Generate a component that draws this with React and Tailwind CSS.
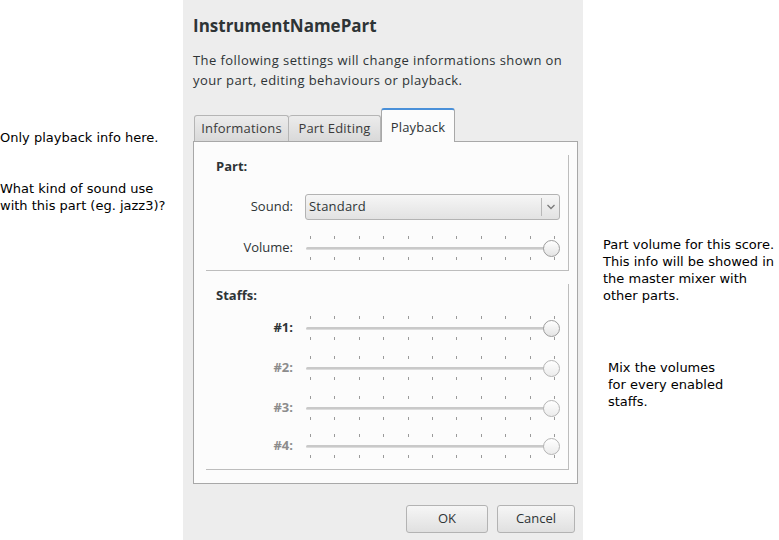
import React from "react";

const dlgFont = { fontFamily: '"Open Sans", "Noto Sans", sans-serif' };

function Ticks() {
  return (
    <div className="flex justify-between px-[5px]">
      {Array.from({ length: 11 }).map((_, i) => (
        <div key={i} className="w-px h-[3px] bg-[#9a9a9a]" />
      ))}
    </div>
  );
}

function Slider({ disabled }) {
  return (
    <div className="relative w-[255px] h-[28px] flex flex-col justify-between py-[2px]">
      <Ticks />
      <Ticks />
      <div className="absolute left-[1px] right-[10px] top-[13px] h-[3px] rounded-full bg-[#c9c9c9] border-b border-[#dcdcdc]" />
      <div
        className={
          "absolute right-0 top-[6px] w-[17px] h-[17px] rounded-full border bg-gradient-to-b " +
          (disabled
            ? "border-[#b4b4b4] from-[#ffffff] to-[#ececec]"
            : "border-[#9c9c9c] from-[#ffffff] to-[#e4e4e4]")
        }
      />
    </div>
  );
}

function Row({ label, children, dim, bold, className = "" }) {
  return (
    <div className={"flex items-center " + className}>
      <div
        className={
          "w-[88px] text-right text-[13px] pr-[1px] " +
          (dim ? "text-[#8c8c8c] font-bold" : bold ? "text-[#2e3436] font-bold" : "text-[#2e3436]")
        }
      >
        {label}
      </div>
      <div className="ml-[11px]">{children}</div>
    </div>
  );
}

export default function App() {
  return (
    <div className="flex w-[779px] h-[540px] bg-white overflow-hidden">
      <div
        className="w-[183px] shrink-0 text-[13px] leading-[17px] text-black"
        style={{ fontFamily: '"DejaVu Sans", sans-serif' }}
      >
        <div className="mt-[129px]">Only playback info here.</div>
        <div className="mt-[34px]">
          What kind of sound use
          <br />
          with this part (eg. jazz3)?
        </div>
      </div>

      <div
        className="w-[400px] shrink-0 h-[540px] bg-[#ededed] flex flex-col pl-[10px] pr-[5px] text-[#2e3436]"
        style={dlgFont}
      >
        <div className="mt-[16px] h-[20px] text-[17px] leading-[20px] font-bold">InstrumentNamePart</div>
        <div className="mt-[14px] text-[13px] leading-[20px] tracking-[0.42px]">
          The following settings will change informations shown on
          <br />
          your part, editing behaviours or playback.
        </div>

        <div className="mt-[18px] h-[33px] flex items-end text-[13px]">
          <div className="ml-[1px] w-[95px] h-[26px] flex items-center justify-center border border-b-0 border-[#b5b5b5] rounded-t-[3px] bg-gradient-to-b from-[#ececec] to-[#d9d9d9] text-[#3a3a3a] tracking-[0.2px]">
            Informations
          </div>
          <div className="w-[92px] h-[26px] flex items-center justify-center border border-l-0 border-b-0 border-[#b5b5b5] rounded-t-[3px] bg-gradient-to-b from-[#ececec] to-[#d9d9d9] text-[#3a3a3a] tracking-[0.2px]">
            Part Editing
          </div>
          <div className="relative -mb-px z-10 w-[74px] h-[34px] flex items-center justify-center border border-b-0 border-[#a8a8a8] border-t-2 border-t-[#4a90d9] rounded-t-[3px] bg-[#fcfcfc] text-[#2e3436] pt-[3px] tracking-[0.2px]">
            Playback
          </div>
        </div>

        <div className="h-[343px] border border-[#a8a8a8] bg-[#fcfcfc] pl-[12px] pr-[8px] pt-[13px] flex flex-col gap-[13px]">
          <div className="h-[116px] border-r border-b border-[#bdbdbd] flex flex-col">
            <div className="pl-[10px] mt-[2px] h-[18px] leading-[18px] text-[13px] font-bold">Part:</div>
            <Row label="Sound:" className="mt-[19px]">
              <div className="w-[255px] h-[26px] rounded-[3px] border border-[#b3b3b3] bg-gradient-to-b from-[#f6f6f6] to-[#e2e2e2] flex items-center text-[13px]">
                <span className="pl-[3px] flex-1 tracking-[0.2px]">Standard</span>
                <div className="w-px h-[18px] bg-[#b8b8b8]" />
                <svg width="16" height="10" viewBox="0 0 16 10" className="ml-[1px]">
                  <path d="M4.5 3 L8 6.5 L11.5 3" fill="none" stroke="#7a7a7a" strokeWidth="1.3" />
                </svg>
              </div>
            </Row>
            <Row label="Volume:" className="mt-[14px]">
              <Slider />
            </Row>
          </div>

          <div className="h-[186px] border-r border-b border-[#bdbdbd] flex flex-col">
            <div className="pl-[10px] mt-[2px] h-[18px] leading-[18px] text-[13px] font-bold">Staffs:</div>
            <Row label="#1:" bold className="mt-[10px]">
              <Slider />
            </Row>
            <Row label="#2:" dim className="mt-[12px]">
              <Slider disabled />
            </Row>
            <Row label="#3:" dim className="mt-[12px]">
              <Slider disabled />
            </Row>
            <Row label="#4:" dim className="mt-[10px]">
              <Slider disabled />
            </Row>
          </div>
        </div>

        <div className="mt-[21px] flex justify-end gap-[9px] pr-[3px] text-[13px]">
          <button className="w-[82px] h-[28px] rounded-[3px] border border-[#b3b3b3] bg-gradient-to-b from-[#f6f6f6] to-[#e0e0e0] text-[#2e3436]">
            OK
          </button>
          <button className="w-[78px] h-[28px] rounded-[3px] border border-[#b3b3b3] bg-gradient-to-b from-[#f6f6f6] to-[#e0e0e0] text-[#2e3436]">
            Cancel
          </button>
        </div>
      </div>

      <div
        className="flex-1 text-[13px] leading-[17px] text-black"
        style={{ fontFamily: '"DejaVu Sans", sans-serif' }}
      >
        <div className="mt-[236px] ml-[20px] whitespace-nowrap">
          Part volume for this score.
          <br />
          This info will be showed in
          <br />
          the master mixer with
          <br />
          other parts.
        </div>
        <div className="mt-[55px] ml-[25px]">
          Mix the volumes
          <br />
          for every enabled
          <br />
          staffs.
        </div>
      </div>
    </div>
  );
}
